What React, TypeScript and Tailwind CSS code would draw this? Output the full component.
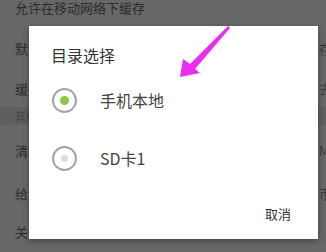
const font = { fontFamily: '"Noto Sans CJK SC", "Noto Sans", sans-serif' };

type Row = { left: string; right?: string; h: string; band?: boolean };

const rows: Row[] = [
  { left: '允许在移动网络下缓存', h: 'h-[40px]' },
  { left: '默认下载目录', right: '存', h: 'h-[42px]' },
  { left: '缓存清理', right: '去', h: 'h-[37px]' },
  { left: '其他', h: 'h-[18px]', band: true },
  { left: '清除缓存', right: 'M', h: 'h-[51px]' },
  { left: '给我们评分', right: '币', h: 'h-[36px]' },
  { left: '关于我们', h: 'h-[40px]' },
];

function Radio({ checked }: { checked: boolean }) {
  return (
    <div className="w-[25px] h-[25px] rounded-full border-2 border-[#a3a3a3] flex items-center justify-center shrink-0">
      {checked ? (
        <div className="w-[9px] h-[9px] rounded-full bg-[#8dc63f]" />
      ) : (
        <div className="w-[7px] h-[7px] rounded-full bg-[#dcdcdc]" />
      )}
    </div>
  );
}

export default function App() {
  return (
    <div
      className="relative w-[326px] h-[252px] overflow-hidden bg-[#676767]"
      style={font}
    >
      {/* dimmed settings list behind the dialog */}
      <div className="flex flex-col -mt-[12px]">
        {rows.map((r) => (
          <div
            key={r.left}
            className={`flex items-center whitespace-nowrap ${r.h} ${
              r.band ? 'bg-[#5f5f5f] text-[11px] text-[#444]' : 'text-[13px] text-[#2c2c2c]'
            }`}
          >
            <span className="pl-[15px] w-[319px] shrink-0">{r.left}</span>
            {r.right && <span className="text-[#3a3a3a]">{r.right}</span>}
          </div>
        ))}
        <div className="h-[20px] pl-[271px] text-[13px] leading-[20px] text-[#2c2c2c]">
          24
        </div>
      </div>

      {/* dialog */}
      <div className="absolute left-[29px] top-[26px] w-[289px] h-[213px] bg-white shadow-[0_2px_6px_rgba(0,0,0,0.35)] flex flex-col">
        <div className="pt-[19px] pl-[22px] text-[16px] leading-[20px] text-[#333]">
          目录选择
        </div>
        <div className="mt-[6px] flex flex-col">
          <div className="h-[58px] flex items-center pl-[23px] gap-[23px]">
            <Radio checked />
            <span className="text-[16px] text-[#444]">手机本地</span>
          </div>
          <div className="h-[58px] flex items-center pl-[23px] gap-[23px]">
            <Radio checked={false} />
            <span className="text-[16px] text-[#444]">SD卡1</span>
          </div>
        </div>
        <div className="mt-[7px] h-[40px] flex items-center justify-end pr-[27px]">
          <span className="text-[13px] text-[#333]">取消</span>
        </div>
      </div>

      {/* annotation arrow */}
      <svg
        className="absolute left-0 top-0"
        width="326"
        height="252"
        viewBox="0 0 326 252"
      >
        <polygon
          points="180,77 183,59 190,64 228,26 230,28 195,69 200,73"
          fill="#ea2cf0"
        />
      </svg>
    </div>
  );
}
